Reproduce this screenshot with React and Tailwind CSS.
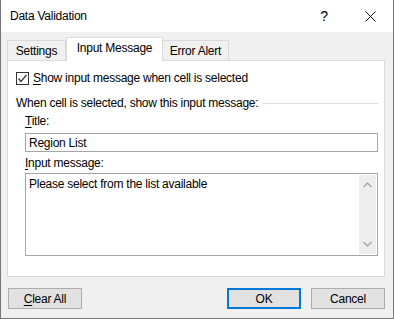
import React from 'react';

function U({ children }) {
  return <span className="underline underline-offset-[2px] decoration-1">{children}</span>;
}

function Chevron({ up }) {
  return (
    <svg width="9" height="6" viewBox="0 0 9 6" className="block">
      <path
        d={up ? 'M0.5 5 L4.5 1 L8.5 5' : 'M0.5 1 L4.5 5 L8.5 1'}
        fill="none"
        stroke="#a6a6a6"
        strokeWidth="1.4"
      />
    </svg>
  );
}

function Button({ children, primary }) {
  return (
    <div
      className={
        'w-[74px] h-[21px] flex items-center justify-center bg-[#e1e1e1] text-black ' +
        (primary ? 'border-2 border-[#0078d7]' : 'border border-[#adadad]')
      }
    >
      {children}
    </div>
  );
}

function App() {
  return (
    <div
      className="w-[394px] h-[319px] flex flex-col bg-[#f0f0f0] border-x border-b border-[#777777] text-[12px] leading-[16px] tracking-[-0.25px] text-black overflow-hidden"
      style={{ fontFamily: '"Segoe UI", "Liberation Sans", Arial, sans-serif' }}
    >
      {/* title bar */}
      <div className="h-[32px] bg-white flex items-center shrink-0">
        <span className="pl-[9px] text-[12px] flex-1">Data Validation</span>
        <span className="w-[46px] text-center text-[14px] leading-none">?</span>
        <div className="w-[46px] flex justify-center">
          <svg width="11" height="11" viewBox="0 0 11 11">
            <path d="M0.5 0.5 L10.5 10.5 M10.5 0.5 L0.5 10.5" stroke="#111" strokeWidth="1" />
          </svg>
        </div>
      </div>

      <div className="flex-1 flex flex-col pl-[6px] pr-[8px]">
        {/* tabs */}
        <div className="flex items-end h-[28px]">
          <div className="h-[20px] w-[59px] border border-b-0 border-[#d9d9d9] flex items-center justify-center">
            Settings
          </div>
          <div className="relative z-10 -mb-px h-[24px] w-[97px] bg-white border border-b-0 border-[#d9d9d9] flex items-center justify-center pb-[3px]">
            Input Message
          </div>
          <div className="h-[20px] w-[66px] border border-b-0 border-l-0 border-[#d9d9d9] flex items-center justify-center">
            Error Alert
          </div>
        </div>

        {/* panel */}
        <div className="h-[217px] bg-white border border-[#d9d9d9] pl-[8px] pr-[6px] flex flex-col">
          <div className="mt-[9px] flex items-center gap-[4px] h-[16px]">
            <div className="w-[13px] h-[13px] border border-[#333] flex items-center justify-center">
              <svg width="11" height="11" viewBox="0 0 11 11">
                <path d="M1.5 5.5 L4 8.5 L9.5 2" fill="none" stroke="#333" strokeWidth="1.2" />
              </svg>
            </div>
            <span>
              <U>S</U>how input message when cell is selected
            </span>
          </div>

          <div className="mt-[9px] flex items-center h-[16px]">
            <span className="whitespace-nowrap">When cell is selected, show this input message:</span>
            <div className="flex-1 ml-[5px] h-px bg-[#dcdcdc]" />
          </div>

          <div className="pl-[9px] flex flex-col">
            <div className="mt-[2px] h-[16px]">
              <U>T</U>itle:
            </div>
            <div className="mt-[4px] h-[19px] border border-[#a5a5a5] flex items-center pl-[3px]">
              Region List
            </div>
            <div className="mt-[3px] h-[16px]">
              <U>I</U>nput message:
            </div>
            <div className="mt-[2px] h-[83px] border border-[#a5a5a5] flex">
              <div className="flex-1 pl-[3px] pt-[2px]">Please select from the list available</div>
              <div className="w-[17px] my-px mr-px bg-[#eeeeee] flex flex-col items-center justify-between py-[7px]">
                <Chevron up />
                <Chevron />
              </div>
            </div>
          </div>
        </div>

        {/* buttons */}
        <div className="mt-[11px] flex pl-[1px]">
          <Button>
            <U>C</U>lear All
          </Button>
          <div className="flex-1" />
          <Button primary>OK</Button>
          <div className="w-[10px]" />
          <Button>Cancel</Button>
        </div>
      </div>
    </div>
  );
}

export default App;
